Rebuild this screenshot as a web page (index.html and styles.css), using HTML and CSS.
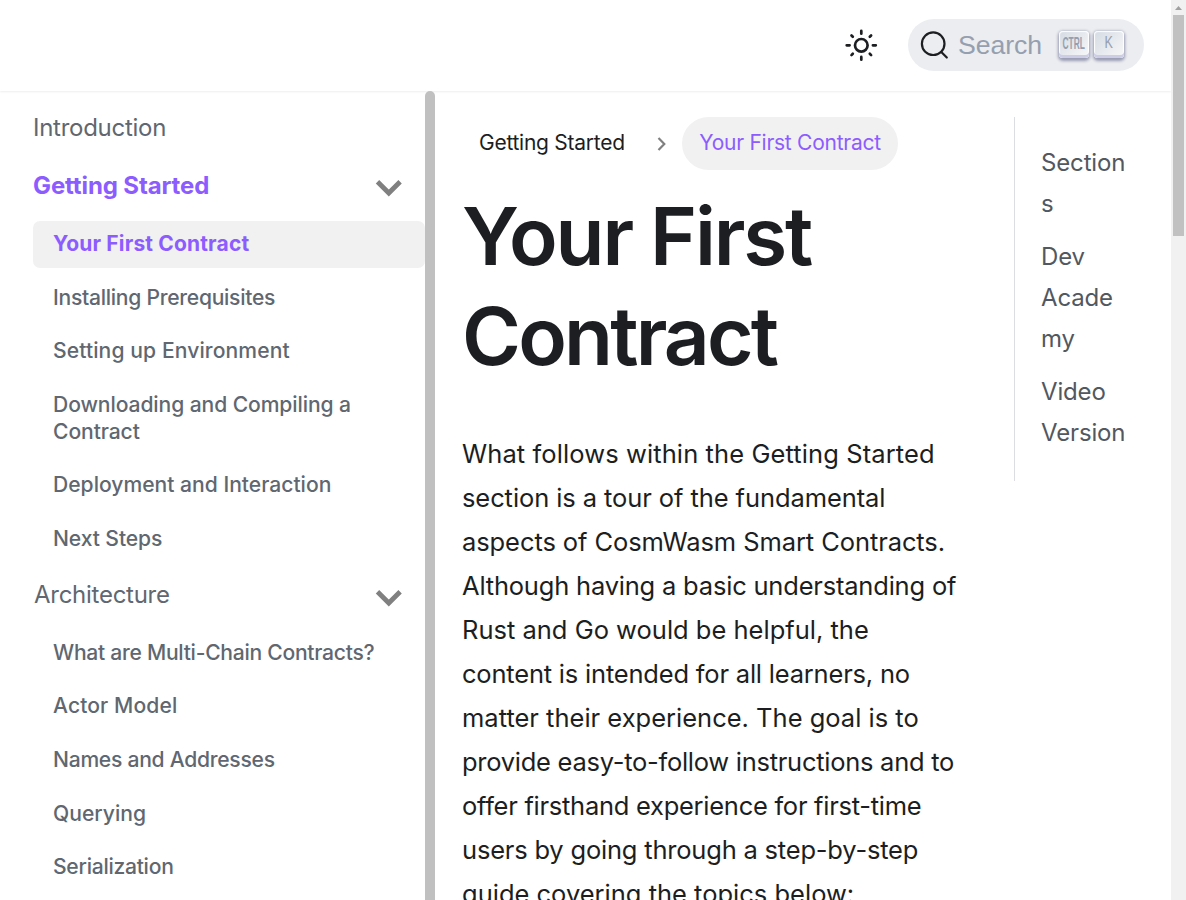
FILE: index.html
```html
<!DOCTYPE html>
<html lang="en">
<head>
<meta charset="utf-8">
<title>Your First Contract</title>
<link rel="stylesheet" href="styles.css">
</head>
<body>
<div class="window">
  <div class="page">
    <header class="navbar">
      <button class="theme" aria-label="Theme">
        <svg width="36" height="36" viewBox="0 0 36 36" fill="none" stroke="#1c1e21" stroke-width="2.7" stroke-linecap="round"><circle cx="18.300" cy="18.300" r="6.3"/><path d="M18.300 3.9v2.800M18.300 29.900v2.800M3.700 18.300h2.900M29.900 18.300h2.900M8.500 8.500l1.300 1.300M26.800 26.800l1.300 1.300M8.500 28.100l1.300-1.300M26.800 9.800l1.300-1.300"/></svg>
      </button>
      <button class="search">
        <svg width="30" height="30" viewBox="0 0 30 30" fill="none" stroke="#1c1e21" stroke-width="2.2" stroke-linecap="round"><circle cx="13.200" cy="13.700" r="11.3"/><path d="m21.300 22 5.500 5.500"/></svg>
        <span class="search-label">Search</span>
        <kbd class="key ctrl"><span>CTRL</span></kbd><kbd class="key"><span class="k">K</span></kbd>
      </button>
    </header>
    <div class="body">
      <nav class="sidebar">
        <a class="cat tight">Introduction</a>
        <a class="cat active">Getting Started<svg class="chev" width="28" height="18" viewBox="0 0 28 18" fill="none" stroke="#808080" stroke-width="4.800"><path d="m2.500 2.800 11.300 11.200 11.300-11.200"/></svg></a>
        <ul>
          <li><a class="sub current">Your First Contract</a></li>
          <li><a class="sub tight">Installing Prerequisites</a></li>
          <li><a class="sub wide">Setting up Environment</a></li>
          <li><a class="sub snug">Downloading and Compiling a Contract</a></li>
          <li><a class="sub">Deployment and Interaction</a></li>
          <li><a class="sub snug">Next Steps</a></li>
        </ul>
        <a class="cat second tight">Architecture<svg class="chev" width="28" height="18" viewBox="0 0 28 18" fill="none" stroke="#808080" stroke-width="4.800"><path d="m2.500 2.800 11.300 11.200 11.300-11.200"/></svg></a>
        <ul>
          <li><a class="sub tight">What are Multi-Chain Contracts?</a></li>
          <li><a class="sub wide">Actor Model</a></li>
          <li><a class="sub tight">Names and Addresses</a></li>
          <li><a class="sub">Querying</a></li>
          <li><a class="sub tight">Serialization</a></li>
        </ul>
      </nav>
      <div class="divider"></div>
      <main>
        <div class="crumbs"><a class="crumb">Getting Started</a><svg width="10" height="16" viewBox="0 0 10 16" fill="none" stroke="#808080" stroke-width="2.200"><path d="m1.500 2 5.800 6-5.800 6"/></svg><a class="crumb here">Your First Contract</a></div>
        <h1>Your First<br><span class="h-tight">Contract</span></h1>
        <p><span class="wide">What follows within the Getting Started</span><br><span class="snug">section is a tour of the fundamental<br>aspects of CosmWasm Smart Contracts.</span><br><span class="mid">Although having a basic understanding of</span><br>Rust and Go would be helpful, the<br><span class="mid">content is intended for all learners, no</span><br>matter their experience. The goal is to<br><span class="tight">provide easy-to-follow instructions and to</span><br><span class="tight">offer firsthand experience for first-time</span><br><span class="mid">users by going through a step-by-step</span><br>guide covering the topics below:</p>
      </main>
      <aside><a>Section<br>s</a><a>Dev<br>Acade<br>my</a><a>Video<br>Version</a></aside>
    </div>
  </div>
  <div class="scrollbar"><svg width="15" height="15" viewBox="0 0 15 15"><path fill="#a0a0a0" d="M4 10h7L7.500 6z"/></svg><div class="thumb"></div></div>
</div>
</body>
</html>
```
FILE: styles.css
```css
* { box-sizing: border-box; }
body { margin: 0; background: #fff; color: #1c1e21; font-family: Inter, "Open Sans", sans-serif; overflow: hidden; }
button { border: 0; padding: 0; background: none; }
ul { list-style: none; margin: 0; padding: 0; }
.window { display: flex; height: 900px; overflow: hidden; }
.page { flex: 1; display: flex; flex-direction: column; min-width: 0; }
.navbar { height: 91px; flex: none; display: flex; align-items: center; justify-content: flex-end; padding: 0 27px 1px 0; gap: 29px; box-shadow: 0 1px 2px rgba(0,0,0,.07); }
.theme, .theme svg { display: block; }
.search { width: 236px; height: 52px; border-radius: 26px; background: #ebedf0; display: flex; align-items: center; padding-left: 12px; }
.search-label { font: 26.67px/52px "Liberation Sans", sans-serif; color: #969faf; margin: 0 17px 0 8px; width: 84px; text-align: left; letter-spacing: -.1px; }
.key { width: 30px; height: 27px; margin-right: 5px; margin-top: -2px; border-radius: 4px; background: linear-gradient(-225deg, #d5dbe4, #f8f8f8); box-shadow: inset 0 -3px 0 #cdcde6, inset 0 0 1px 1px #fff, 0 1.500px 3px 1px rgba(30,35,90,.4); color: #969faf; display: flex; justify-content: center; align-items: center; padding-bottom: 3px; font: 700 14px "Liberation Sans", sans-serif; }
.ctrl span { transform: scale(.6, 1.12); }
.k { font-weight: 400; font-size: 17px; transform: scaleX(.74); }
.body { flex: 1; display: flex; min-height: 0; }
.sidebar { width: 425px; flex: none; padding: 11px 0 0 33px; color: #606770; white-space: nowrap; }
.cat { display: flex; justify-content: space-between; align-items: center; height: 50px; margin-bottom: 8px; font-size: 24px; font-weight: 440; padding-right: 22px; }
.cat.second { margin-top: 7px; margin-bottom: 10px; padding-left: 1px; }
.chev { position: relative; top: 3px; }
.active, .current { color: #8c5cff; font-weight: 700; }
.cat.active { margin-bottom: 11px; font-weight: 700; letter-spacing: -.13px; }
.sub { display: block; padding: 10px 20px; line-height: 26.67px; font-size: 21.1px; font-weight: 450; margin-bottom: 7px; border-radius: 7px; white-space: normal; }
.sub.current { background: #f1f1f1; font-size: 21px; font-weight: 700; letter-spacing: .16px; }
.wide { letter-spacing: .1px; }
.snug { letter-spacing: -.09px; }
.mid { letter-spacing: -.2px; }
.tight { letter-spacing: -.27px; }
.divider { width: 10px; flex: none; background: silver; border-radius: 5px 5px 0 0; }
main { width: 579px; flex: none; padding: 26px 0 0 27px; white-space: nowrap; }
.crumbs { display: flex; align-items: center; height: 53px; }
.crumb { font-size: 21px; padding: 0 17px; line-height: 52px; height: 53px; letter-spacing: -.26px; }
.crumb + svg { margin: 0 15px; }
.here { background: #f1f1f1; color: #8c5cff; border-radius: 27px; padding-left: 17.5px; }
h1 { margin: 16px 0 0; font-size: 80px; line-height: 100px; font-weight: 600; letter-spacing: -2.15px; }
.h-tight { letter-spacing: -2.8px; }
p { margin: 46px 0 0; font-size: 25.5px; line-height: 44px; }
aside { height: 364px; margin-top: 26px; border-left: 1px solid #dadde1; padding: 26px 0 0 26px; color: #525860; font-size: 24px; line-height: 40.67px; white-space: nowrap; letter-spacing: -.15px; }
aside a { display: block; margin-bottom: 13px; }
.scrollbar { width: 15px; background: #f1f1f1; }
.scrollbar svg { display: block; }
.thumb { width: 11px; height: 221px; margin-left: 2px; background: #c1c1c1; }
```
